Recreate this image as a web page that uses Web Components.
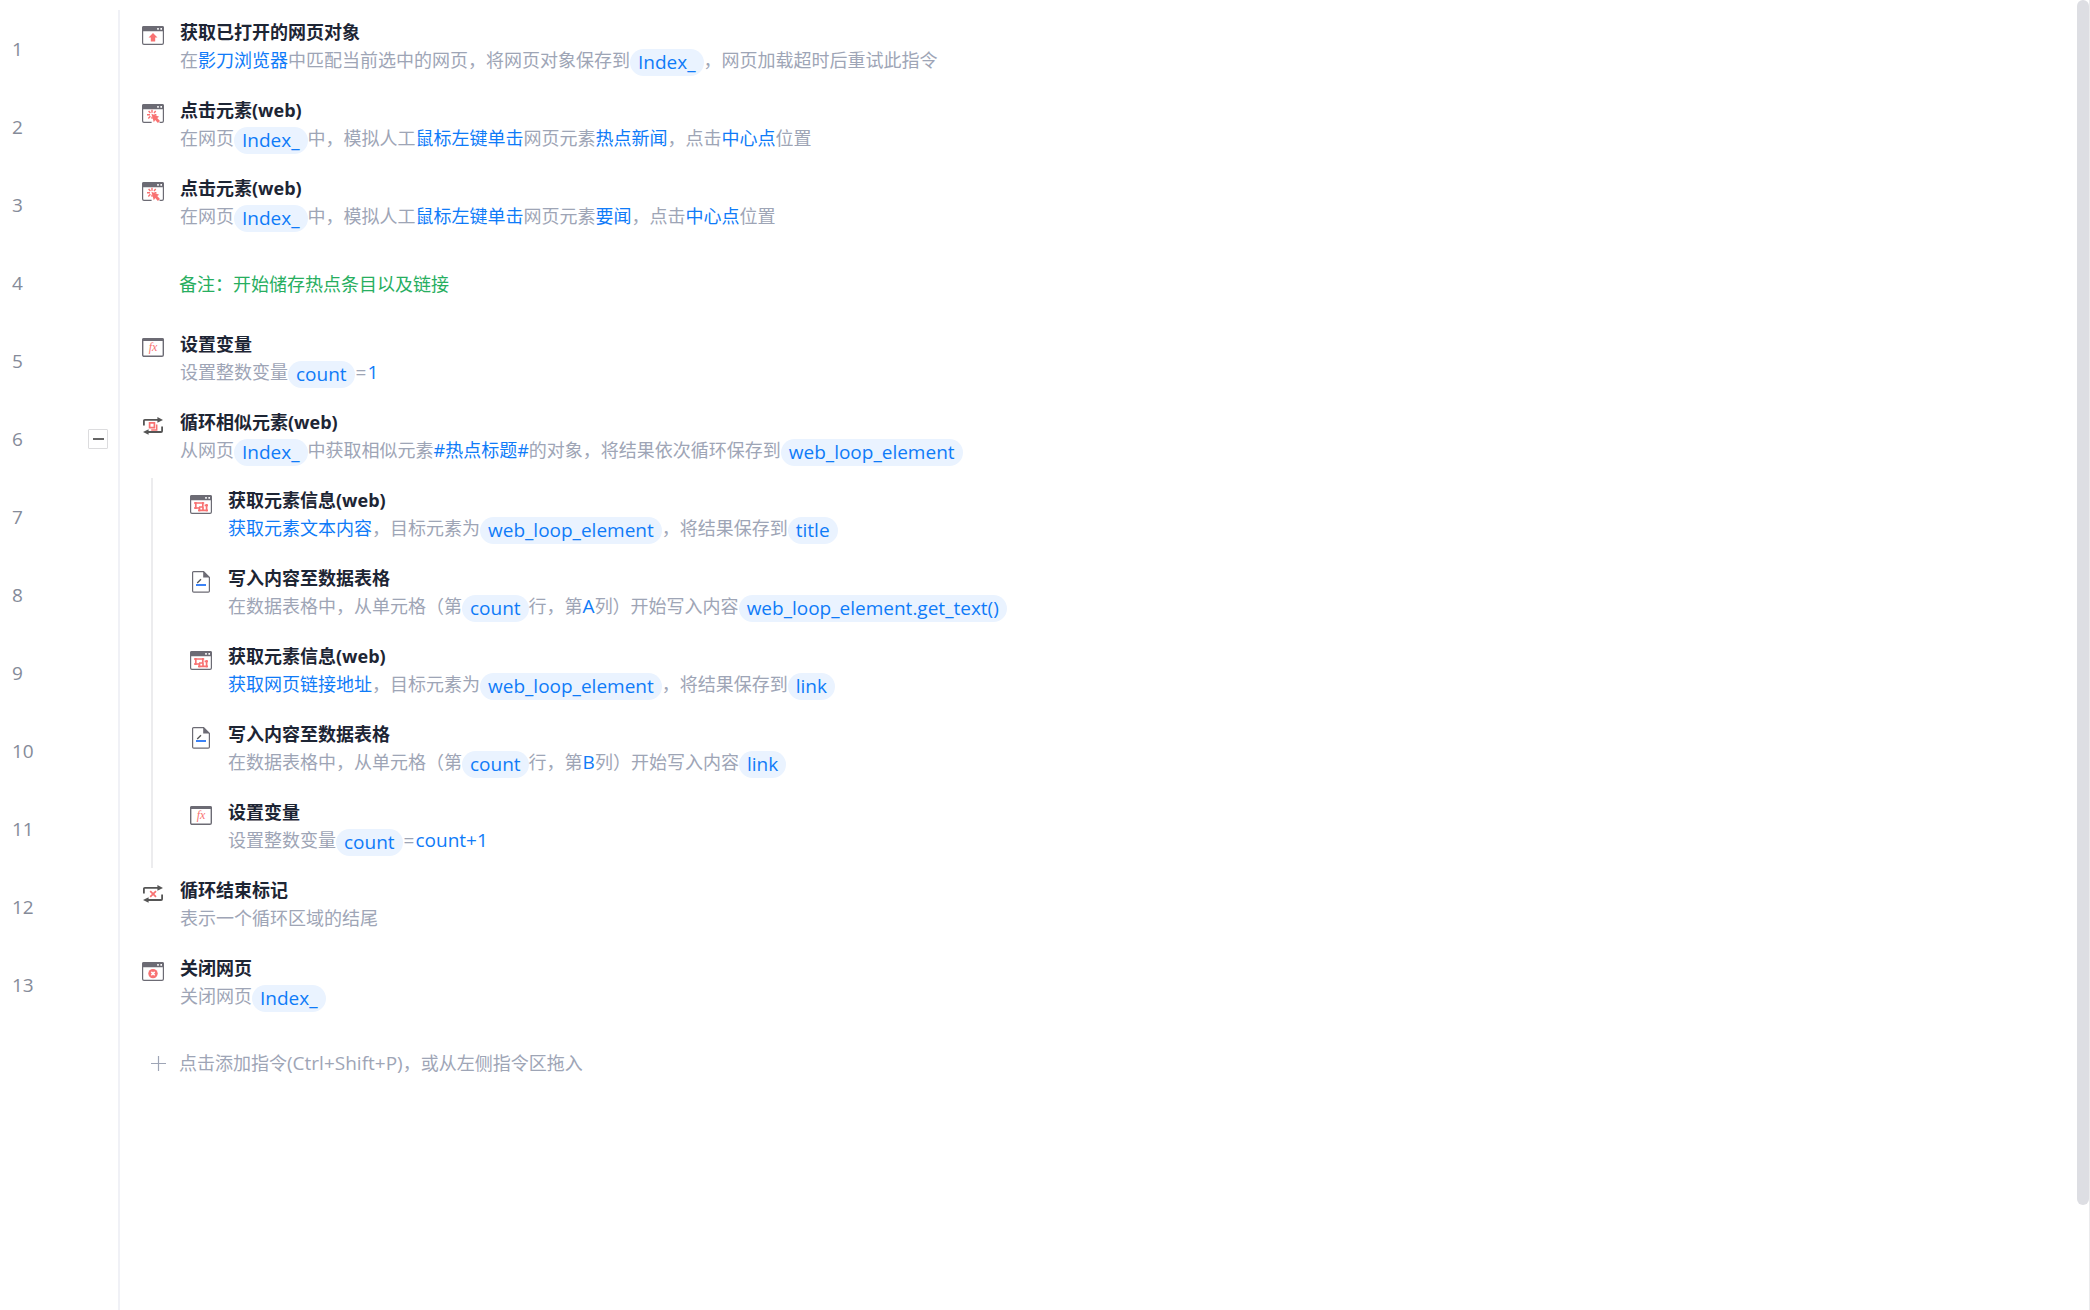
<!DOCTYPE html>
<html lang="zh-CN">
<head>
<meta charset="utf-8">
<title>流程编辑器</title>
<style>
  html, body { height: 100%; }
  body {
    margin: 0;
    background: #fff;
    color: #9ea5b6;
    font-family: "Open Sans", "Noto Sans CJK SC", sans-serif;
    font-size: 18px;
    line-height: 28px;
  }
</style>
</head>
<body>
<flow-editor>
  <flow-step number="1" icon="open" heading="获取已打开的网页对象">在<step-value>影刀浏览器</step-value>中匹配当前选中的网页，将网页对象保存到<var-chip>Index_</var-chip>，网页加载超时后重试此指令</flow-step>
  <flow-step number="2" icon="click" heading="点击元素(web)">在网页<var-chip>Index_</var-chip>中，模拟人工<step-value>鼠标左键单击</step-value>网页元素<step-value>热点新闻</step-value>，点击<step-value>中心点</step-value>位置</flow-step>
  <flow-step number="3" icon="click" heading="点击元素(web)">在网页<var-chip>Index_</var-chip>中，模拟人工<step-value>鼠标左键单击</step-value>网页元素<step-value>要闻</step-value>，点击<step-value>中心点</step-value>位置</flow-step>
  <flow-note number="4">备注：开始储存热点条目以及链接</flow-note>
  <flow-step number="5" icon="fx" heading="设置变量">设置整数变量<var-chip>count</var-chip><step-operator>=</step-operator><step-value latin>1</step-value></flow-step>
  <flow-step number="6" icon="loop" heading="循环相似元素(web)" collapsible>从网页<var-chip>Index_</var-chip>中获取相似元素<step-value>#热点标题#</step-value>的对象，将结果依次循环保存到<var-chip>web_loop_element</var-chip></flow-step>
  <flow-step number="7" icon="info" heading="获取元素信息(web)" nested><step-value>获取元素文本内容</step-value>，目标元素为<var-chip>web_loop_element</var-chip>，将结果保存到<var-chip>title</var-chip></flow-step>
  <flow-step number="8" icon="write" heading="写入内容至数据表格" nested>在数据表格中，从单元格（第<var-chip>count</var-chip>行，第<step-value latin>A</step-value>列）开始写入内容<var-chip>web_loop_element.get_text()</var-chip></flow-step>
  <flow-step number="9" icon="info" heading="获取元素信息(web)" nested><step-value>获取网页链接地址</step-value>，目标元素为<var-chip>web_loop_element</var-chip>，将结果保存到<var-chip>link</var-chip></flow-step>
  <flow-step number="10" icon="write" heading="写入内容至数据表格" nested>在数据表格中，从单元格（第<var-chip>count</var-chip>行，第<step-value latin>B</step-value>列）开始写入内容<var-chip>link</var-chip></flow-step>
  <flow-step number="11" icon="fx" heading="设置变量" nested>设置整数变量<var-chip>count</var-chip><step-operator>=</step-operator><step-value latin>count+1</step-value></flow-step>
  <flow-step number="12" icon="loopend" heading="循环结束标记">表示一个循环区域的结尾</flow-step>
  <flow-step number="13" icon="close" heading="关闭网页">关闭网页<var-chip>Index_</var-chip></flow-step>
  <add-step></add-step>
</flow-editor>

<script>
const GRAY = '#6c6b74', RED = '#f87272', DARK = '#555';

// Browser window frame shared by the web commands
const frame = `<rect x=".6" y=".6" width="20.8" height="17.8" rx="1.4" fill="#fff" stroke="${GRAY}" stroke-width="1.2"/>
  <path d="M0 5.2V2Q0 0 2 0H20Q22 0 22 2V5.2Z" fill="${GRAY}"/>
  <path d="M15.2 2h1.6v1.7h-1.6zM18.4 2H20v1.7h-1.6z" fill="#fff"/>`;
const loopArrows = `<path d="M1.9 8.6V3.9Q1.9 2.9 2.9 2.9H16M20.1 9.6V13.9Q20.1 15 19.1 15H6" fill="none" stroke="${DARK}" stroke-width="1.8"/>
  <path d="M15.4 .1L21 2.9L15.4 5.7ZM6.6 12.2L1 15L6.6 17.8Z" fill="${DARK}"/>`;

// Each entry: top offset of the art inside the 22 x 23 icon box, then the art
const ICONS = {
  open: [1, frame + `<path d="M11 7L15.5 11.5H13.2V15.4H8.8V11.5H6.5Z" fill="${RED}"/>`],
  click: [1, frame + `<path d="M9.6 17H17.6V19H9.6Z" fill="#fff"/>
    <path d="M10 5.8V8.8M6.6 7L8.4 9M13.7 7L12 9M5 10.7H8M12.4 10.7H14.4M6.3 14.4L8.4 12.3M10 12.8V14.8" stroke="${RED}" stroke-width="1.4"/>
    <path d="M9.4 9.8L17.2 12.8L15.2 14L18 16.9L15.9 18.9L13.2 16L11.8 18.2Z" fill="${RED}"/>`],
  fx: [1, `<rect x=".7" y=".7" width="20.6" height="17.6" rx="1.4" fill="#fff" stroke="${GRAY}" stroke-width="1.4"/>
    <path d="M0 3V2Q0 0 2 0H20Q22 0 22 2V3Z" fill="${GRAY}"/>
    <text x="11" y="13" text-anchor="middle" font-family="Liberation Serif, serif" font-style="italic" font-size="12" fill="${RED}">fx</text>`],
  loop: [2, loopArrows + `<path d="M7.6 5.8H12.4V10.6H7.6Z" fill="none" stroke="${RED}" stroke-width="1.7"/>
    <path d="M14.7 7.4V12.9H9.2" fill="none" stroke="${RED}" stroke-width="1.5"/>`],
  loopend: [2, loopArrows + `<path d="M8.2 6.2L14 11.8M14 6.2L8.2 11.8" stroke="${RED}" stroke-width="1.8"/>`],
  info: [2, frame + `<path d="M4 8H14.2M5.8 7V14M4 13H10M12.8 7V12M9 12H12.8M9.5 12V16.6M8 15.4H18M16.6 9V16.6M14.6 10.4H18M13 12V15" fill="none" stroke="${RED}" stroke-width="1.7"/>`],
  write: [0, `<path d="M2.6 1.6Q2.6 .6 3.6 .6H13.6L19.4 6.4V20Q19.4 21.2 18.2 21.2H3.8Q2.6 21.2 2.6 20Z" fill="#fff" stroke="${GRAY}" stroke-width="1.2"/>
    <path d="M13.2 0L20 6.6H13.2Z" fill="${GRAY}"/>
    <path d="M7.2 12L11 8.2" stroke="${DARK}" stroke-width="1.3"/>
    <path d="M6 14H16" stroke="#3b82f6" stroke-width="2"/>`],
  close: [1, frame + `<circle cx="11" cy="11.6" r="4.7" fill="${RED}"/><path d="M9.3 9.9L12.7 13.3M12.7 9.9L9.3 13.3" stroke="#fff" stroke-width="1.5"/>`]
};

class BaseElement extends HTMLElement {
  connectedCallback() {
    if (this.shadowRoot) return;
    this.attachShadow({ mode: 'open' }).innerHTML = this.render();
  }
}

customElements.define('var-chip', class extends BaseElement {
  render() {
    return `<style>
      :host { display: inline-block; padding: 0 8px; border-radius: 14px; background: #eaf3ff;
              color: #0f7bf8; font-size: 19px; line-height: 27px; vertical-align: -2px; }
    </style><slot></slot>`;
  }
});

customElements.define('step-value', class extends BaseElement {
  render() {
    return `<style>
      :host { color: #0f7bf8; }
      :host([latin]) { font-size: 19px; line-height: 1; }
    </style><slot></slot>`;
  }
});

customElements.define('step-operator', class extends BaseElement {
  render() {
    return `<style>:host { padding: 0 1px; font-size: 19px; line-height: 1; }</style><slot></slot>`;
  }
});

customElements.define('step-icon', class extends BaseElement {
  render() {
    const [top, art] = ICONS[this.getAttribute('name')];
    return `<style>:host { display: block; flex: none; width: 22px; } svg { display: block; }</style>
      <svg width="22" height="23" viewBox="0 0 22 23" aria-hidden="true"><g transform="translate(0 ${top})">${art}</g></svg>`;
  }
});

customElements.define('step-gutter', class extends BaseElement {
  render() {
    return `<style>
      :host { display: flex; flex: none; box-sizing: border-box; width: 120px; padding: 0 10px 0 12px;
              align-items: center; justify-content: space-between; border-right: 2px solid #f0f1f6;
              color: #858b99; font-size: 19px; }
      button { display: grid; place-items: center; width: 20px; height: 20px; padding: 0;
               border: 1px solid #dcdcde; border-radius: 1px; background: #fff; }
      button::before { content: ""; width: 11px; height: 2px; background: #666; }
    </style><span>${this.getAttribute('number') || ''}</span>${
      this.hasAttribute('collapsible') ? '<button type="button" aria-label="折叠"></button>' : ''}`;
  }
});

customElements.define('flow-step', class extends BaseElement {
  render() {
    return `<style>
      :host { display: flex; height: 78px; }
      .body { display: flex; gap: 16px; padding-left: 22px; }
      :host([nested]) .body { margin-left: 31px; padding-left: 37px; border-left: 2px solid #ececee; }
      step-icon { margin-top: 15px; }
      .text { padding-top: 8px; white-space: nowrap; }
      h3 { margin: 0; color: #1d2534; font-size: 18px; line-height: 28px; font-weight: 700; }
      p { margin: 0; height: 28px; }
    </style>
    <step-gutter number="${this.getAttribute('number')}" ${this.hasAttribute('collapsible') ? 'collapsible' : ''}></step-gutter>
    <div class="body">
      <step-icon name="${this.getAttribute('icon')}"></step-icon>
      <div class="text"><h3>${this.getAttribute('heading')}</h3><p><slot></slot></p></div>
    </div>`;
  }
});

customElements.define('flow-note', class extends BaseElement {
  render() {
    return `<style>
      :host { display: flex; height: 78px; }
      p { align-self: center; margin: 0; padding: 2px 0 0 59px; color: #27ae60; }
    </style>
    <step-gutter number="${this.getAttribute('number')}"></step-gutter><p><slot></slot></p>`;
  }
});

customElements.define('add-step', class extends BaseElement {
  render() {
    return `<style>
      :host { display: flex; height: 78px; }
      button { display: flex; align-items: center; gap: 13px; margin: 0; padding: 0 0 0 31px; border: 0;
               background: none; color: inherit; font: inherit; }
      .keys { font-size: 19px; line-height: 1; }
    </style>
    <step-gutter></step-gutter>
    <button type="button">
      <svg width="15" height="15" viewBox="0 0 15 15" aria-hidden="true"><path d="M0 7.5H15M7.5 0V15" stroke="#9ea5b6" stroke-width="1.2"/></svg>
      <span>点击添加指令<span class="keys">(Ctrl+Shift+P)</span>，或从左侧指令区拖入</span>
    </button>`;
  }
});

customElements.define('scroll-rail', class extends BaseElement {
  render() {
    return `<style>
      :host { display: block; flex: none; width: 12px; height: 100vh; border-right: 1px solid #ebebed; }
      div { height: 92%; border-radius: 6px; background: #dddee3; }
    </style><div></div>`;
  }
});

customElements.define('flow-editor', class extends BaseElement {
  render() {
    return `<style>
      :host { display: flex; min-height: 100vh; }
      main { display: flex; flex: 1; flex-direction: column; min-width: 0; padding-top: 10px; }
      step-gutter { flex: 1; }
    </style>
    <main><slot></slot><step-gutter></step-gutter></main>
    <scroll-rail></scroll-rail>`;
  }
});
</script>
</body>
</html>
